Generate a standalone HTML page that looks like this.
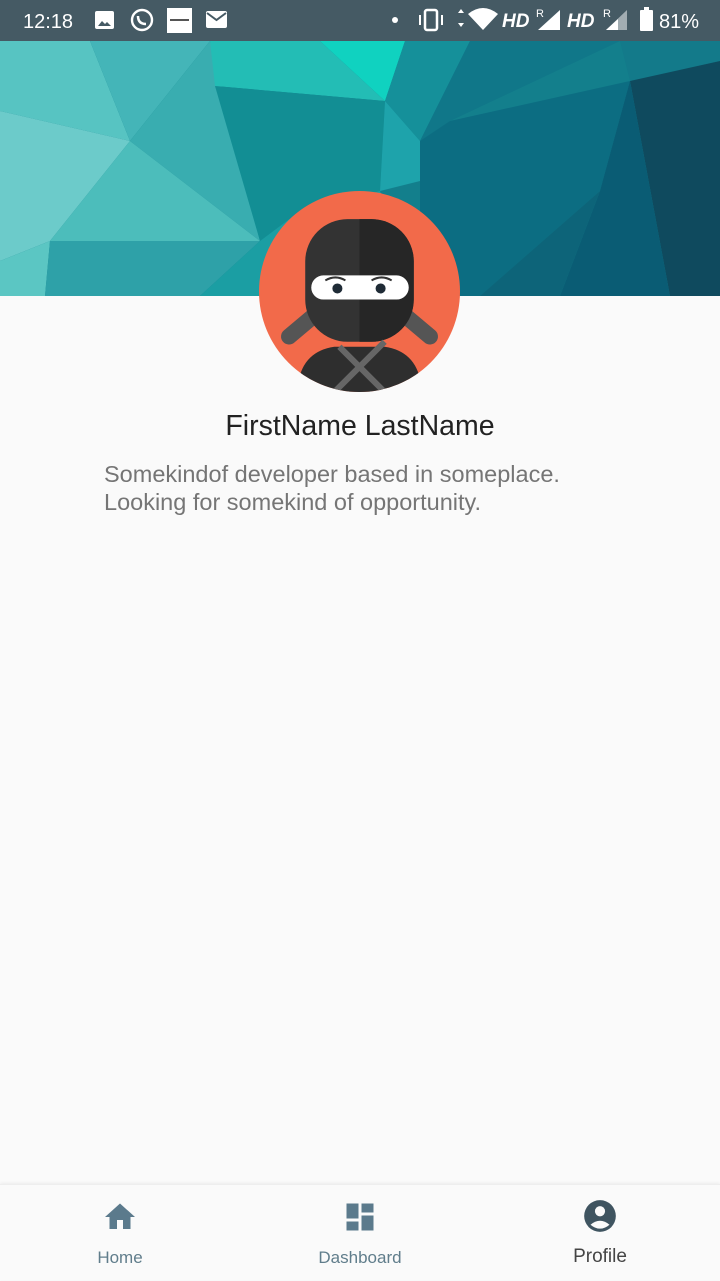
<!DOCTYPE html>
<html><head><meta charset="utf-8"><style>
*{margin:0;padding:0;box-sizing:border-box}
body{width:720px;height:1280px;background:#fafafa;font-family:"Liberation Sans",Arial,sans-serif;position:relative;overflow:hidden}
.sb{position:absolute;top:0;left:0;width:720px;height:41px;background:#455a64;color:#fff}
.hdr{position:absolute;top:41px;left:0;width:720px;height:255px}
.av{position:absolute;left:259px;top:191px;width:201px;height:201px}
.name{position:absolute;top:410px;left:0;width:720px;text-align:center;font-size:28.5px;color:#222}
.desc{position:absolute;top:460px;left:104px;font-size:23.5px;line-height:28px;color:#757575;white-space:nowrap}
.nav{position:absolute;top:1184px;left:0;width:720px;height:96px;background:#fafafa;border-top:1px solid #eee;box-shadow:0 -1px 3px rgba(0,0,0,.06)}
.it{position:absolute;top:0;width:240px;height:96px;text-align:center}
.it svg{position:absolute;left:102px;top:14px}
.it span{position:absolute;left:0;width:240px;top:63px;font-size:17px;color:#607d8b}
</style></head><body>
<div class="sb">
<svg width="720" height="41" viewBox="0 0 720 41">
<text x="23" y="28" fill="#fff" font-size="20" font-family="Liberation Sans">12:18</text>
<rect x="95" y="11" width="19" height="18" rx="2" fill="#fff"/><path d="M98 26l4-5 3 3 2-2 4 4z" fill="#455a64"/>
<circle cx="142" cy="20" r="10" fill="none" stroke="#fff" stroke-width="2.4"/><path d="M138 16q0 8 8 8" stroke="#fff" stroke-width="2.5" fill="none"/>
<rect x="167" y="8" width="25" height="25" fill="#fff"/><rect x="170" y="19" width="19" height="2" fill="#555"/>
<rect x="206" y="11" width="21" height="17" rx="2" fill="#fff"/><path d="M207 13l9.5 7 9.5-7" stroke="#455a64" stroke-width="2" fill="none"/>
<circle cx="395" cy="20" r="3" fill="#fff"/>
<rect x="425" y="10" width="12" height="20" rx="2" fill="none" stroke="#fff" stroke-width="2.5"/><rect x="419" y="15" width="2" height="10" fill="#fff"/><rect x="441" y="15" width="2" height="10" fill="#fff"/>
<path d="M458 13l3-4 3 4zM458 23l3 4 3-4z" fill="#fff"/>
<path d="M468 14q15-12 30 0l-15 16z" fill="#fff"/>
<text x="502" y="27" fill="#fff" font-size="19" font-weight="bold" font-style="italic">HD</text>
<text x="536" y="17" fill="#fff" font-size="11">R</text>
<path d="M538 30l22-20v20z" fill="#fff"/>
<text x="567" y="27" fill="#fff" font-size="19" font-weight="bold" font-style="italic">HD</text>
<text x="603" y="17" fill="#fff" font-size="11">R</text>
<path d="M606 30l21-20v20z" fill="#fff" opacity=".5"/><path d="M606 30l12-11v11z" fill="#fff"/>
<rect x="640" y="10" width="13" height="21" rx="1" fill="#fff"/><rect x="644" y="7" width="5" height="3" fill="#fff"/>
<text x="659" y="28" fill="#fff" font-size="20">81%</text>
</svg></div>
<svg class="hdr" viewBox="0 0 720 255" preserveAspectRatio="none">
<rect width="720" height="255" fill="#137f8c"/>
<polygon points="0,0 90,0 130,100 0,70" fill="#57c4c2"/>
<polygon points="90,0 210,0 130,100" fill="#44b5b8"/>
<polygon points="0,70 130,100 50,200 0,220" fill="#6ccbca"/>
<polygon points="0,220 50,200 45,255 0,255" fill="#5bc6c3"/>
<polygon points="130,100 210,0 260,200" fill="#39adb0"/>
<polygon points="130,100 260,200 50,200" fill="#4cbdbb"/>
<polygon points="50,200 260,200 200,255 45,255" fill="#2ea1a8"/>
<polygon points="210,0 320,0 385,60 215,45" fill="#23bdb5"/>
<polygon points="215,45 385,60 380,150 300,170 260,200" fill="#128e94"/>
<polygon points="320,0 405,0 385,60" fill="#10d2c0"/>
<polygon points="260,200 300,170 380,150 420,255 200,255" fill="#1b9ea3"/>
<polygon points="385,60 405,0 470,0 420,100" fill="#15909a"/>
<polygon points="385,60 420,100 420,140 380,150" fill="#1ea3ab"/>
<polygon points="420,100 470,0 620,0 450,80" fill="#107789"/>
<polygon points="420,100 450,80 630,40 600,150 480,255 420,255" fill="#0c6d82"/>
<polygon points="620,0 720,0 720,20 630,40" fill="#137a8a"/>
<polygon points="630,40 720,20 720,255 670,255" fill="#0f4a5e"/>
<polygon points="600,150 630,40 670,255 560,255" fill="#0a5c74"/>
<polygon points="480,255 600,150 560,255" fill="#0d6479"/>
</svg>
<svg class="av" viewBox="0 0 200 200">
<defs><clipPath id="c"><circle cx="100" cy="100" r="100"/></clipPath><clipPath id="h"><rect x="46" y="28" width="108" height="122" rx="42"/></clipPath></defs>
<circle cx="100" cy="100" r="100" fill="#f26a4a"/>
<g clip-path="url(#c)">
<g transform="rotate(-40 40 135)"><rect x="18" y="128" width="50" height="16" rx="8" fill="#555"/></g>
<g transform="rotate(40 160 135)"><rect x="132" y="128" width="50" height="16" rx="8" fill="#555"/></g>
<path d="M38 200 Q40 160 75 155 L125 155 Q160 160 162 200z" fill="#2e2e2e"/>
<rect x="46" y="28" width="108" height="122" rx="42" fill="#333"/>
<rect x="100" y="20" width="60" height="140" fill="#262626" clip-path="url(#h)"/>
<rect x="52" y="84" width="97" height="24" rx="12" fill="#fff"/>
<circle cx="78" cy="97" r="5" fill="#1f2b36"/><circle cx="121" cy="97" r="5" fill="#1f2b36"/>
<path d="M66 89q10-6 20 0M112 89q10-6 20 0" stroke="#333" stroke-width="2" fill="none"/>
<path d="M70 205L125 150M130 205L80 155" stroke="#666" stroke-width="6"/>
</g></svg>
<div class="name">FirstName LastName</div>
<div class="desc">Somekindof developer based in someplace.<br>Looking for somekind of opportunity.</div>
<div class="nav">
<div class="it" style="left:0"><svg width="36" height="36" viewBox="0 0 24 24"><path d="M10 20v-6h4v6h5v-8h3L12 3 2 12h3v8z" fill="#5b7a8c"/></svg><span>Home</span></div>
<div class="it" style="left:240px"><svg width="36" height="36" viewBox="0 0 24 24"><path d="M3 13h8V3H3zm0 8h8v-6H3zm10 0h8V11h-8zm0-18v6h8V3z" fill="#5b7a8c"/></svg><span>Dashboard</span></div>
<div class="it" style="left:480px"><svg width="38" height="38" viewBox="0 0 24 24" style="left:101px;top:12px"><circle cx="12" cy="12" r="10" fill="#3f5460"/><circle cx="12" cy="9" r="3.2" fill="#fafafa"/><path d="M6 17.5q6-5 12 0q-6 5-12 0z" fill="#fafafa"/></svg><span style="color:#444;font-size:19px;top:61px">Profile</span></div>
</div>
</body></html>
